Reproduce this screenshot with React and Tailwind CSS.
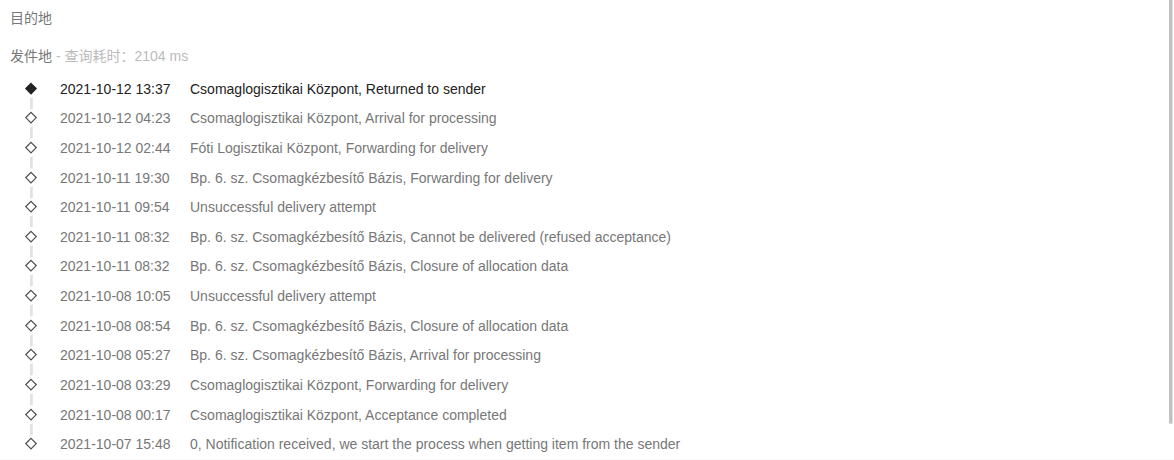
const events = [
  ['2021-10-12 13:37', 'Csomaglogisztikai Központ, Returned to sender'],
  ['2021-10-12 04:23', 'Csomaglogisztikai Központ, Arrival for processing'],
  ['2021-10-12 02:44', 'Fóti Logisztikai Központ, Forwarding for delivery'],
  ['2021-10-11 19:30', 'Bp. 6. sz. Csomagkézbesítő Bázis, Forwarding for delivery'],
  ['2021-10-11 09:54', 'Unsuccessful delivery attempt'],
  ['2021-10-11 08:32', 'Bp. 6. sz. Csomagkézbesítő Bázis, Cannot be delivered (refused acceptance)'],
  ['2021-10-11 08:32', 'Bp. 6. sz. Csomagkézbesítő Bázis, Closure of allocation data'],
  ['2021-10-08 10:05', 'Unsuccessful delivery attempt'],
  ['2021-10-08 08:54', 'Bp. 6. sz. Csomagkézbesítő Bázis, Closure of allocation data'],
  ['2021-10-08 05:27', 'Bp. 6. sz. Csomagkézbesítő Bázis, Arrival for processing'],
  ['2021-10-08 03:29', 'Csomaglogisztikai Központ, Forwarding for delivery'],
  ['2021-10-08 00:17', 'Csomaglogisztikai Központ, Acceptance completed'],
  ['2021-10-07 15:48', '0, Notification received, we start the process when getting item from the sender'],
];

function Marker({ filled, last }) {
  return (
    <svg
      className="h-7 w-3 shrink-0 overflow-visible"
      viewBox="0 0 12 28"
      fill="none"
      aria-hidden="true"
    >
      {!last && <path d="M5 23.6l2.8-1.5v11.8L5 34.4z" fill="#e2e2e2" />}
      <path
        d="M6 8.4L11.2 13.6 6 18.8 0.8 13.6z"
        fill={filled ? '#222222' : '#ffffff'}
        stroke={filled ? '#222222' : '#4a4a4a'}
        strokeWidth="1.2"
      />
    </svg>
  );
}

function TrackingEvent({ time, text, latest, last }) {
  return (
    <li className={`flex items-center pl-[15px] ${latest ? 'text-[#222222]' : 'text-[#777777]'}`}>
      <Marker filled={latest} last={last} />
      <time className="ml-[23px] w-[130px] shrink-0">{time}</time>
      <span>{text}</span>
    </li>
  );
}

export default function App() {
  return (
    <div className="flex min-h-screen border-b border-[#f8f8f8] bg-white font-['Liberation_Sans','Noto_Sans_CJK_SC',sans-serif] text-sm text-[#777777]">
      <main className="flex min-w-0 flex-1 flex-col pt-2 pl-[10px]">
        <h2>目的地</h2>
        <h2 className="mt-[18px] mb-2">
          发件地<span className="text-[#bbbbbb]"> - 查询耗时：2104 ms</span>
        </h2>
        <ol className="grid flex-1 auto-rows-fr">
          {events.map(([time, text], i) => (
            <TrackingEvent
              key={i}
              time={time}
              text={text}
              latest={i === 0}
              last={i === events.length - 1}
            />
          ))}
        </ol>
      </main>
      <div className="flex w-[5px] shrink-0 flex-col" aria-hidden="true">
        <div className="mr-px basis-[424px] rounded-b-sm border-r border-[#e0e0e0] bg-[#c1c1c1]" />
      </div>
    </div>
  );
}
